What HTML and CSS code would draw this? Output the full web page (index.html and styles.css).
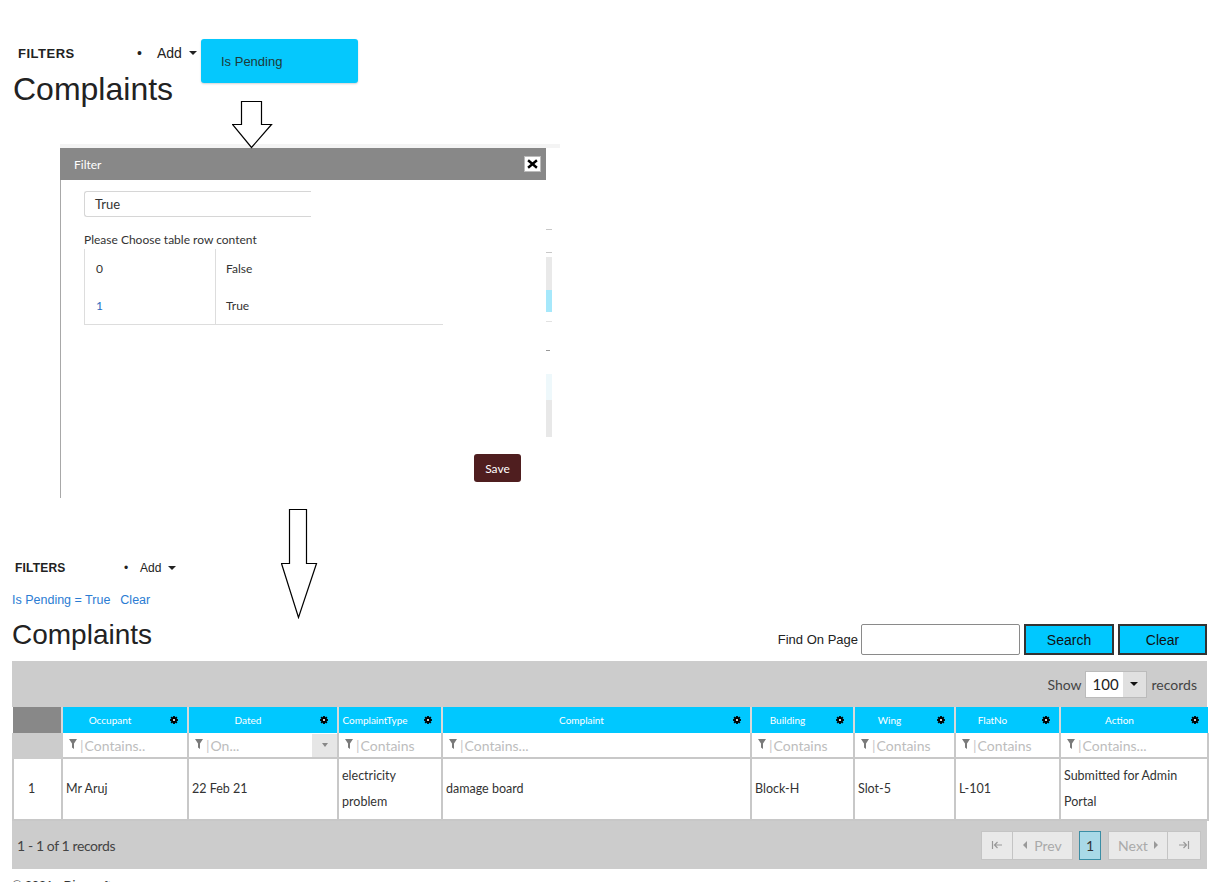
FILE: index.html
```html
<!DOCTYPE html>
<html lang="en">
<head>
<meta charset="utf-8">
<title>Complaints</title>
<link rel="stylesheet" href="styles.css">
</head>
<body>
<svg class="defs" width="0" height="0" aria-hidden="true">
  <symbol id="gear" viewBox="0 0 8 8">
    <g fill="#000">
      <circle cx="4" cy="4" r="2.7"/>
      <rect x="3.1" y="0" width="1.8" height="8"/>
      <rect x="0" y="3.1" width="8" height="1.8"/>
      <rect x="3.1" y="0" width="1.8" height="8" transform="rotate(45 4 4)"/>
      <rect x="3.1" y="0" width="1.8" height="8" transform="rotate(-45 4 4)"/>
    </g>
    <circle cx="4" cy="4" r="1.1" fill="#fff"/>
  </symbol>
  <symbol id="funnel" viewBox="0 0 8 10">
    <polygon points="0,0 8,0 5,4.5 5,10 3,8.5 3,4.5" fill="#7a7a7a"/>
  </symbol>
</svg>

<div class="page">
  <svg class="arrow arrow-1" width="41" height="48" viewBox="0 0 41 48">
    <polygon points="9.5,0.5 29.5,0.5 29.5,23.5 39.5,23.5 19.5,46.5 0.5,23.5 9.5,23.5" fill="#fff" stroke="#000" stroke-width="1.2"/>
  </svg>
  <svg class="arrow arrow-2" width="37" height="110" viewBox="0 0 37 110">
    <polygon points="8.5,0.5 25.5,0.5 25.5,54.5 35.5,54.5 17.5,108.5 0.5,54.5 8.5,54.5" fill="#fff" stroke="#000" stroke-width="1.2"/>
  </svg>

  <div class="filterbar filterbar-1">
    <span class="filters-label">FILTERS</span>
    <span class="add-item"><span class="bullet">•</span>Add<span class="caret"></span>
      <span class="menu">Is Pending</span>
    </span>
  </div>
  <h1 class="title-1">Complaints</h1>

  <div class="shade-line"></div>
  <div class="dialog-row">
    <div class="dialog">
      <div class="dialog-head">
        <span>Filter</span>
        <span class="close">
          <svg width="11" height="10" viewBox="0 0 11 10"><path d="M2 2 L9 8 M9 2 L2 8" stroke="#000" stroke-width="2.4" stroke-linecap="square"/></svg>
        </span>
      </div>
      <div class="dialog-body">
        <div class="dlg-input">True</div>
        <div class="dlg-hint">Please Choose table row content</div>
        <table class="choice">
          <tr><td class="c-key">0</td><td>False</td></tr>
          <tr><td class="c-key c-link">1</td><td>True</td></tr>
        </table>
        <div class="dlg-foot"><button class="save">Save</button></div>
      </div>
    </div>
    <div class="strip">
      <div class="s-gap1"></div>
      <div class="s-line"></div>
      <div class="s-gap2"></div>
      <div class="s-line"></div>
      <div class="s-gap3"></div>
      <div class="s-grey"></div>
      <div class="s-cyan"></div>
      <div class="s-gap4"></div>
      <div class="s-line s-faint"></div>
      <div class="s-gap5"></div>
      <div class="s-dash"></div>
      <div class="s-gap6"></div>
      <div class="s-pale"></div>
      <div class="s-grey2"></div>
    </div>
  </div>

  <div class="filterbar filterbar-2">
    <span class="filters-label">FILTERS</span>
    <span class="add-item"><span class="bullet">•</span>Add<span class="caret"></span></span>
  </div>
  <div class="active-filter"><a>Is Pending = True</a><a class="clear">Clear</a></div>

  <div class="headrow">
    <h2 class="title-2">Complaints</h2>
    <div class="find">
      <span class="find-label">Find On Page</span>
      <span class="find-input"></span>
      <button class="btn btn-search">Search</button>
      <button class="btn btn-clear">Clear</button>
    </div>
  </div>

  <div class="grid">
    <div class="band">
      <span class="show">Show</span>
      <span class="select"><span class="sel-val">100</span><span class="sel-arrow"><span class="caret caret-dark"></span></span></span>
      <span class="show">records</span>
    </div>
    <table class="grid-table">
      <colgroup>
        <col style="width:49px"><col style="width:126px"><col style="width:150px"><col style="width:104px"><col style="width:309px"><col style="width:103px"><col style="width:101px"><col style="width:105px"><col style="width:148px">
      </colgroup>
      <tr class="head">
        <th class="corner"></th>
        <th><div class="th-in"><span class="th-text">Occupant</span><svg class="gear"><use href="#gear"/></svg></div></th>
        <th><div class="th-in"><span class="th-text">Dated</span><svg class="gear"><use href="#gear"/></svg></div></th>
        <th><div class="th-in"><span class="th-text">ComplaintType</span><svg class="gear"><use href="#gear"/></svg></div></th>
        <th><div class="th-in"><span class="th-text">Complaint</span><svg class="gear"><use href="#gear"/></svg></div></th>
        <th><div class="th-in"><span class="th-text">Building</span><svg class="gear"><use href="#gear"/></svg></div></th>
        <th><div class="th-in"><span class="th-text">Wing</span><svg class="gear"><use href="#gear"/></svg></div></th>
        <th><div class="th-in"><span class="th-text">FlatNo</span><svg class="gear"><use href="#gear"/></svg></div></th>
        <th><div class="th-in"><span class="th-text">Action</span><svg class="gear"><use href="#gear"/></svg></div></th>
      </tr>
      <tr class="filter-row">
        <td class="corner-f"></td>
        <td><div class="f-in"><svg class="funnel"><use href="#funnel"/></svg><span class="f-bar">|</span>Contains..</div></td>
        <td><div class="f-in f-date"><svg class="funnel"><use href="#funnel"/></svg><span class="f-bar">|</span>On...<span class="f-drop"><span class="caret caret-grey"></span></span></div></td>
        <td><div class="f-in"><svg class="funnel"><use href="#funnel"/></svg><span class="f-bar">|</span>Contains</div></td>
        <td><div class="f-in"><svg class="funnel"><use href="#funnel"/></svg><span class="f-bar">|</span>Contains...</div></td>
        <td><div class="f-in"><svg class="funnel"><use href="#funnel"/></svg><span class="f-bar">|</span>Contains</div></td>
        <td><div class="f-in"><svg class="funnel"><use href="#funnel"/></svg><span class="f-bar">|</span>Contains</div></td>
        <td><div class="f-in"><svg class="funnel"><use href="#funnel"/></svg><span class="f-bar">|</span>Contains</div></td>
        <td><div class="f-in"><svg class="funnel"><use href="#funnel"/></svg><span class="f-bar">|</span>Contains...</div></td>
      </tr>
      <tr class="data-row">
        <td class="row-num">1</td>
        <td>Mr Aruj</td>
        <td>22 Feb 21</td>
        <td>electricity<br>problem</td>
        <td>damage board</td>
        <td>Block-H</td>
        <td>Slot-5</td>
        <td>L-101</td>
        <td>Submitted for Admin<br>Portal</td>
      </tr>
    </table>
    <div class="pager">
      <span class="pager-info">1 - 1 of 1 records</span>
      <div class="pager-btns">
        <span class="pbtn pbtn-first"><svg width="12" height="10" viewBox="0 0 12 10"><path d="M1.5 1 V9 M11 5 H3.5 M6.5 2 L3.5 5 L6.5 8" fill="none" stroke="#999" stroke-width="1.2"/></svg></span>
        <span class="pbtn pbtn-prev"><span class="tri tri-left"></span>Prev</span>
        <span class="pbtn pbtn-page">1</span>
        <span class="pbtn pbtn-next">Next<span class="tri tri-right"></span></span>
        <span class="pbtn pbtn-last"><svg width="12" height="10" viewBox="0 0 12 10"><path d="M10.5 1 V9 M1 5 H8.5 M5.5 2 L8.5 5 L5.5 8" fill="none" stroke="#999" stroke-width="1.2"/></svg></span>
      </div>
    </div>
  </div>
  <div class="copyright">© 2021 - Dicersoft</div>
</div>
</body>
</html>
```

FILE: styles.css
```css
* { box-sizing: border-box; }
html, body { margin: 0; padding: 0; background: #fff; }
body { font-family: "Liberation Sans", Arial, sans-serif; color: #222; }
.defs { position: absolute; width: 0; height: 0; overflow: hidden; }

.page { position: relative; width: 1216px; height: 882px; overflow: hidden; }

.arrow { position: absolute; z-index: 5; }
.arrow-1 { left: 232px; top: 101px; }
.arrow-2 { left: 281px; top: 509px; }

/* filter bars */
.filterbar { display: flex; align-items: center; }
.filters-label { font-weight: bold; }
.add-item { position: relative; display: flex; align-items: center; height: 100%; }
.caret { display: inline-block; width: 0; height: 0; border-left: 4px solid transparent; border-right: 4px solid transparent; border-top: 4px solid #222; }

.filterbar-1 { margin-top: 44px; height: 18px; padding-left: 18px; font-size: 14px; }
.filterbar-1 .filters-label { font-size: 13px; letter-spacing: 0.5px; width: 119px; }
.filterbar-1 .bullet { width: 20px; }
.filterbar-1 .caret { margin-left: 7px; }

.menu {
  position: absolute; left: 64px; top: -5px; width: 157px; height: 44px;
  display: flex; align-items: center; padding-left: 20px;
  background: #05c8fd; border-radius: 3px; box-shadow: 0 1px 2px rgba(0,0,0,0.18);
  font-size: 13px; color: #1d3a38;
}

.title-1 { margin: 9px 0 0 13px; font-size: 32px; line-height: 37px; font-weight: normal; color: #222; }

/* dialog */
.shade-line { margin: 36px 0 0 60px; width: 500px; height: 4px; background: #f4f4f4; }
.dialog-row { display: flex; margin-left: 60px; }
.dialog { width: 486px; font-family: Lato, "Open Sans", sans-serif; }
.dialog-head {
  height: 32px; background: #888; color: #fff; font-size: 12px;
  display: flex; align-items: center; justify-content: space-between; padding: 0 5px 0 14px;
}
.close { width: 17px; height: 16px; background: #fff; border: 1px solid #bbb; display: flex; align-items: center; justify-content: center; }
.dialog-body { height: 318px; border-left: 1px solid #a8a8a8; background: #fff; padding: 11px 0 0 23px; display: flex; flex-direction: column; }
.dlg-input {
  width: 227px; height: 26px; border: 1px solid #d6d6d6; border-right: none; border-radius: 3px 0 0 3px;
  padding-left: 10px; font-size: 13px; line-height: 24px; color: #333;
}
.dlg-hint { margin-top: 15px; font-size: 12px; line-height: 16px; color: #333; }
.choice { margin-top: 1px; width: 359px; border-collapse: collapse; border-left: 1px solid #ddd; border-bottom: 1px solid #ddd; font-size: 12px; color: #333; }
.choice td { height: 38px; padding: 0 0 0 10px; }
.choice tr:last-child td { height: 37px; }
.choice .c-key { width: 131px; border-right: 1px solid #ddd; padding-left: 11px; }
.choice .c-link { color: #2a6cc0; }
.dlg-foot { margin-top: auto; display: flex; justify-content: flex-end; padding: 0 25px 16px 0; }
.save { width: 47px; height: 28px; background: #4f1e1f; color: #fff; border: none; border-radius: 3px; font-family: Lato, sans-serif; font-size: 12px; padding: 0; }

.strip { width: 6px; display: flex; flex-direction: column; }
.s-gap1 { height: 81px; }
.s-line { height: 1px; background: #c8c8c8; }
.s-gap2 { height: 22px; }
.s-gap3 { height: 4px; }
.s-grey { height: 33px; background: #e9e9e9; }
.s-cyan { height: 22px; background: #a6e8fb; }
.s-gap4 { height: 9px; }
.s-faint { background: #e2e2e2; }
.s-gap5 { height: 28px; }
.s-dash { height: 1px; width: 4px; background: #999; }
.s-gap6 { height: 23px; }
.s-pale { height: 26px; background: #eef8fb; }
.s-grey2 { height: 37px; background: #e8e8e8; }

/* second section */
.filterbar-2 { margin-top: 62px; height: 16px; padding-left: 15px; font-size: 12px; }
.filterbar-2 .filters-label { width: 109px; font-size: 12px; letter-spacing: 0.2px; }
.filterbar-2 .bullet { width: 16px; }
.filterbar-2 .caret { margin-left: 7px; }

.active-filter { margin-top: 16px; padding-left: 12px; font-size: 12.5px; line-height: 16px; color: #2b7cd3; }
.active-filter .clear { margin-left: 10px; }

.headrow { display: flex; align-items: center; margin-top: 16px; height: 31px; padding: 0 9px 0 12px; }
.title-2 { margin: -10px 0 0 0; font-size: 28px; line-height: 31px; font-weight: normal; color: #222; }
.find { margin-left: auto; display: flex; align-items: center; gap: 4px; }
.find-label { font-size: 13px; margin-right: -1px; color: #222; }
.find-input { width: 159px; height: 31px; border: 1px solid #8a8a8a; border-radius: 2px; background: #fff; }
.btn { height: 31px; background: #00c8ff; border: 2px solid #333; font-family: "Liberation Sans", Arial, sans-serif; font-size: 14px; color: #111; padding: 0; }
.btn-search { width: 90px; }
.btn-clear { width: 89px; }

/* grid */
.grid { margin: 6px 9px 0 12px; width: 1195px; font-family: Lato, "Open Sans", sans-serif; }
.band { height: 46px; background: #ccc; display: flex; align-items: center; justify-content: flex-end; padding-right: 10px; }
.show { font-size: 14px; color: #444; }
.select { display: flex; width: 62px; height: 27px; margin: 0 5px 0 3px; border: 1px solid #bbb; background: #fff; }
.sel-val { width: 37px; padding-left: 7px; font-size: 15px; line-height: 25px; color: #222; }
.sel-arrow { flex: 1; background: #e0e0e0; display: flex; align-items: center; justify-content: center; }
.caret-dark { border-top-color: #111; }

.grid-table { width: 1195px; table-layout: fixed; border-collapse: collapse; }
.grid-table th { height: 26px; padding: 0 9px 0 2px; background: #00c8ff; color: #fff; font-size: 10px; font-weight: normal; border-left: 2px solid #d9d9d9; }
.grid-table th.corner { background: #888; border-left: none; padding: 0; }
.th-in { display: flex; align-items: center; }
.th-text { flex: 1; text-align: center; margin-right: 15px; white-space: nowrap; }
.gear { width: 8px; height: 8px; flex: none; }

.filter-row td { height: 25px; padding: 0; background: #fff; border: 2px solid #c8c8c8; border-top: none; overflow: hidden; }
.filter-row td.corner-f { background: #ccc; border-color: #ccc; }
.f-in { display: flex; align-items: center; padding-left: 6px; white-space: nowrap; overflow: hidden; font-size: 14px; color: #bdbdbd; height: 23px; }
.funnel { width: 8px; height: 10px; flex: none; margin-top: -3px; }
.f-bar { margin: 0 1px 0 3px; color: #c8c8c8; }
.f-date { position: relative; }
.f-drop { margin-left: auto; width: 25px; height: 23px; background: #e6e6e6; display: flex; align-items: center; justify-content: center; }
.caret-grey { border-top-color: #888; border-left-width: 3px; border-right-width: 3px; border-top-width: 4px; }

.data-row td { height: 62px; padding: 0 4px 0 3px; background: #fff; border: 2px solid #c8c8c8; font-size: 12.5px; line-height: 26px; color: #333; vertical-align: middle; }
.data-row td.row-num { padding-left: 14px; }

.pager { height: 48px; background: #ccc; display: flex; align-items: center; justify-content: space-between; padding: 0 6px 0 5px; }
.pager-info { font-size: 14px; color: #444; letter-spacing: -0.4px; }
.pager-btns { display: flex; align-items: center; }
.pbtn { height: 29px; display: flex; align-items: center; justify-content: center; background: #e9e9e9; border: 1px solid #c4c4c4; color: #aaa; font-size: 14px; }
.pbtn-first { width: 32px; }
.pbtn-prev { width: 60px; border-left: none; }
.pbtn-page { width: 22px; margin: 0 7px 0 6px; background: #a9d9e7; border-color: #3b8ea5; color: #333; }
.pbtn-next { width: 60px; }
.pbtn-last { width: 33px; border-left: none; }
.tri { display: inline-block; width: 0; height: 0; border-top: 4px solid transparent; border-bottom: 4px solid transparent; }
.tri-left { border-right: 4px solid #999; margin-right: 7px; }
.tri-right { border-left: 4px solid #999; margin-left: 6px; }

.copyright { margin-top: 8px; padding-left: 12px; font-family: Lato, sans-serif; font-size: 12px; color: #333; }
```
